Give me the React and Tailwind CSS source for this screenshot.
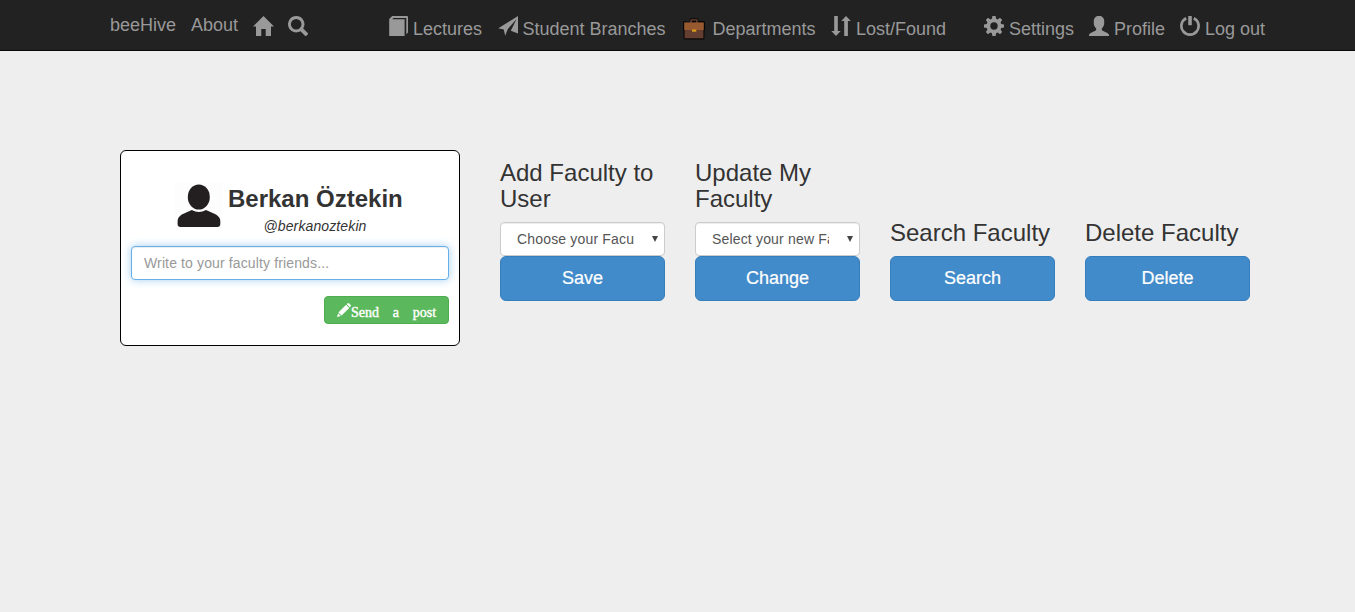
import React from "react";

function Icon({ children, className = "w-5 h-5" }) {
  return (
    <svg viewBox="0 0 20 20" fill="currentColor" className={`shrink-0 ${className}`}>
      {children}
    </svg>
  );
}

const HomeIcon = () => (
  <svg viewBox="0 0 21 20" fill="currentColor" className="w-[21px] h-5 shrink-0">
    <path d="M10.5 0 21 10.5H18V20H12.7V13H8.3V20H3V10.5H0Z" />
  </svg>
);

const SearchIcon = () => (
  <Icon>
    <path fillRule="evenodd" d="M8.2 0a8.2 8.2 0 1 0 4.3 15.2l4.5 4.5a1 1 0 0 0 1.4 0l1.3-1.3a1 1 0 0 0 0-1.4l-4.5-4.5A8.2 8.2 0 0 0 8.2 0Zm0 2.9a5.3 5.3 0 1 1 0 10.6 5.3 5.3 0 0 1 0-10.6Z" />
  </Icon>
);

const BookIcon = () => (
  <Icon>
    <path d="M4.2 0H19Q20 0 20 1V16.5L18.3 18.2V1.9H5.5L4.2 3.3H16.6V20H1.2V3Z" />
  </Icon>
);

const PlaneIcon = () => (
  <Icon className="relative left-px h-5 w-5">
    <path d="M20 0V17.5L12.8 14.7L18.4 3.3L9.7 13.2L7.2 19.7L5.7 13.6L.3 12.3Z" />
  </Icon>
);

const BriefcaseIcon = () => (
  <svg viewBox="0 0 22 22" className="w-[22px] h-[22px] shrink-0">
    <path d="M6.5 4V2Q6.5 .3 8.2 .3H13.8Q15.5 .3 15.5 2V3H20.5Q22 3 22 4.5V12L21.5 13V20Q21.5 21.5 20 21.5H2Q.5 21.5.5 20V13L0 12V4.5Q0 3 1.5 3Z" fill="#090706" />
    <path d="M8 5V2.5Q8 1.8 8.7 1.8H13.3Q14 1.8 14 2.5V5" fill="none" stroke="#75483a" strokeWidth="1.3" />
    <path d="M1.2 4.4H20.8V12H1.2Z" fill="#97592f" />
    <path d="M1.6 12H20.4V20.3H1.6Z" fill="#643e31" />
    <path d="M9 11.5H13.3V13.7H9Z" fill="#d9a01c" />
  </svg>
);

const SortIcon = () => (
  <Icon>
    <path d="M3.2 0H6.8V15H9.7L5 20 .3 15H3.2ZM15 0 19.8 5H16.9V20H13.2V5H10.3Z" />
  </Icon>
);

const GearIcon = () => (
  <Icon>
    <path fillRule="evenodd" d="M8.4 0H11.6L12.1 2.8 13.7 3.4 16 1.8 18.2 4 16.6 6.3 17.2 7.9 20 8.4V11.6L17.2 12.1 16.6 13.7 18.2 16 16 18.2 13.7 16.6 12.1 17.2 11.6 20H8.4L7.9 17.2 6.3 16.6 4 18.2 1.8 16 3.4 13.7 2.8 12.1 0 11.6V8.4L2.8 7.9 3.4 6.3 1.8 4 4 1.8 6.3 3.4 7.9 2.8ZM10 6.3a3.7 3.7 0 1 0 0 7.4 3.7 3.7 0 0 0 0-7.4Z" />
  </Icon>
);

const UserIcon = () => (
  <Icon>
    <path d="M10 0C13.3 0 15.2 2 15.2 5.2V7.6C15.2 9.8 14 11.4 12.8 12.4V13.6C12.8 14.2 13.2 14.5 13.7 14.7L18.4 16.9Q20 17.6 20 19V20H0V19Q0 17.6 1.6 16.9L6.3 14.7C6.8 14.5 7.2 14.2 7.2 13.6V12.4C6 11.4 4.8 9.8 4.8 7.6V5.2C4.8 2 6.7 0 10 0Z" />
  </Icon>
);

const PowerIcon = () => (
  <Icon>
    <path d="M6.2 2.3A8.6 8.6 0 1 0 13.8 2.3" fill="none" stroke="currentColor" strokeWidth="2.7" />
    <rect x="8.2" y="0" width="3.6" height="9.2" rx=".5" />
  </Icon>
);

const PencilIcon = () => (
  <svg viewBox="0 0 14 14" fill="currentColor" className="w-3.5 h-3.5 shrink-0">
    <path d="M10.7.3q.6-.5 1.2 0L13.7 2q.6.6 0 1.3l-.9.9-3-3ZM9.1 1.7 12.3 4.9 4.6 12.5 1.4 9.4ZM1.1 10.2 3.8 12.9 0 14Z" />
  </svg>
);

const Avatar = () => (
  <svg viewBox="0 0 47 47" className="w-[47px] h-[47px] shrink-0 bg-[#fdfdfd]">
    <ellipse cx="23.8" cy="15" rx="11" ry="12.6" fill="#231f20" />
    <path d="M16.8 28Q23.8 32 31 28L41 32.4Q45.3 35 45.3 39V42Q45.3 45 42.3 45H5.6Q2.6 45 2.6 42V39Q2.6 35 6.8 32.4Z" fill="#231f20" />
  </svg>
);

function NavItem({ icon, label, className }) {
  return (
    <a className={`flex shrink-0 items-start whitespace-nowrap ${className}`}>
      {icon}
      <span className="ml-[5px] mt-[3px]">{label}</span>
    </a>
  );
}

function Navbar() {
  return (
    <nav className="flex h-[51px] items-start border-b border-[#080808] bg-[#222] pl-[110px] pt-4 text-lg leading-5 text-[#999]">
      <a className="-mt-px w-[81px] shrink-0">beeHive</a>
      <a className="-mt-px w-[62px] shrink-0">About</a>
      <a className="w-[35px] shrink-0"><HomeIcon /></a>
      <a className="w-[100px] shrink-0"><SearchIcon /></a>
      <NavItem icon={<BookIcon />} label="Lectures" className="w-[109px]" />
      <NavItem icon={<PlaneIcon />} label="Student Branches" className="w-[184px] pl-[0.4px]" />
      <a className="flex w-[150px] shrink-0 items-start pl-[1.5px]">
        <span className="mt-0.5"><BriefcaseIcon /></span>
        <span className="ml-2 mt-[3px]">Departments</span>
      </a>
      <NavItem icon={<SortIcon />} label="Lost/Found" className="w-[153px]" />
      <NavItem icon={<GearIcon />} label="Settings" className="w-[105px]" />
      <NavItem icon={<UserIcon />} label="Profile" className="w-[91px]" />
      <NavItem icon={<PowerIcon />} label="Log out" className="w-[86px]" />
    </nav>
  );
}

function PostCard() {
  return (
    <section className="flex h-[196px] w-[340px] shrink-0 flex-col rounded-md border border-black bg-white px-2.5">
      <div className="flex h-[95px] items-start pl-11 pt-[31px]">
        <Avatar />
        <div className="ml-1.5 w-[174px] pt-1 text-center">
          <h3 className="whitespace-nowrap text-2xl font-bold leading-[26px]">Berkan Öztekin</h3>
          <p className="mt-1 text-sm italic leading-5 tracking-[0.12px]">@berkanoztekin</p>
        </div>
      </div>
      <input
        placeholder="Write to your faculty friends..."
        className="h-[34px] w-full shrink-0 rounded border border-[#66afe9] bg-white px-3 text-sm tracking-[0.13px] shadow-[inset_0_1px_1px_rgba(0,0,0,0.075),0_0_8px_rgba(102,175,233,0.6)] outline-none placeholder:text-[#999]"
      />
      <button className="mt-4 flex h-7 w-[125px] shrink-0 items-start self-end rounded border border-[#4cae4c] bg-[#5cb85c] pl-3 pt-1.5 font-['Liberation_Serif',serif] text-sm leading-5 text-white [word-spacing:10.3px]">
        <PencilIcon />
        <span className="whitespace-nowrap [-webkit-text-stroke:0.4px_white]">Send a post</span>
      </button>
    </section>
  );
}

function FacultyAction({ title, option, action }) {
  return (
    <section className="flex w-[165px] shrink-0 flex-col justify-end">
      <h3 className="mb-2.5 text-2xl leading-[26px]">{title}</h3>
      {option && (
        <div className="flex h-[34px] shrink-0 items-center rounded border border-[#ccc] bg-white pl-4 text-sm leading-5 text-[#555] shadow-[inset_0_1px_1px_rgba(0,0,0,0.075)]">
          <span className="w-[117px] overflow-hidden whitespace-nowrap tracking-[0.17px]">{option}</span>
          <svg viewBox="0 0 6 6" className="ml-[18px] h-1.5 w-1.5 shrink-0">
            <path d="M0 0H6L3 6Z" fill="#444" />
          </svg>
        </div>
      )}
      <button className="h-[45px] shrink-0 rounded-md border border-[#357ebd] bg-[#428bca] pb-0.5 text-lg leading-6 text-white [-webkit-text-stroke:0.2px_white]">
        {action}
      </button>
    </section>
  );
}

export default function App() {
  return (
    <div className="h-[612px] w-full overflow-hidden bg-[#eee] font-['Liberation_Sans',Arial,sans-serif] text-[#333]">
      <Navbar />
      <main className="flex items-start pl-[120px] pt-[99px]">
        <PostCard />
        <div className="ml-10 flex h-[151px] gap-[30px]">
          <FacultyAction title="Add Faculty to User" option="Choose your Facu" action="Save" />
          <FacultyAction title="Update My Faculty" option="Select your new Faculty" action="Change" />
          <FacultyAction title="Search Faculty" action="Search" />
          <FacultyAction title="Delete Faculty" action="Delete" />
        </div>
      </main>
    </div>
  );
}
